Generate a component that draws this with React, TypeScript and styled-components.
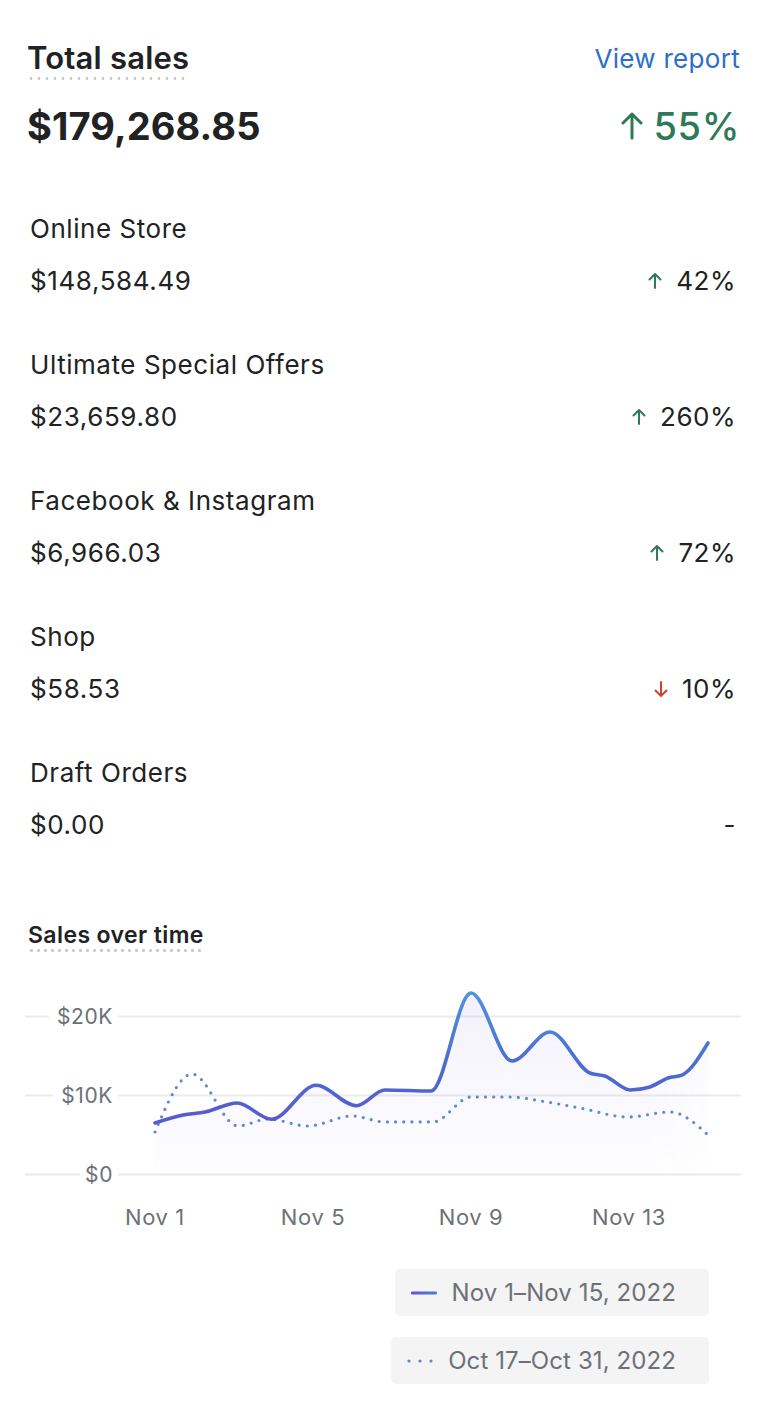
import React from "react";
import styled, { createGlobalStyle } from "styled-components";

const GlobalStyle = createGlobalStyle`
  html, body { margin: 0; padding: 0; background: #ffffff; }
  body { font-family: Inter, "Noto Sans", sans-serif; color: #202223; -webkit-font-smoothing: antialiased; }
  * { box-sizing: border-box; }
`;

const GREEN = "#2e7a58";
const RED = "#d0432b";
const MUTED = "#6d7175";

const Page = styled.main`
  width: 769px;
  padding: 39px 29px 40px 25px;
  display: flex;
  flex-direction: column;
`;

const Header = styled.section`
  display: flex;
  flex-direction: column;
  gap: 24px;
  padding-left: 2px;
`;

const HeaderLine = styled.div`
  display: flex;
  justify-content: space-between;
  align-items: center;
`;

const DottedTitle = styled.h2<{ $size: number; $line: number; $gap: number; $track: number }>`
  margin: 0;
  display: inline-block;
  font-size: ${(p) => p.$size}px;
  line-height: ${(p) => p.$line}px;
  font-weight: 600;
  letter-spacing: ${(p) => p.$track}px;
  padding-bottom: 3px;
  background-image: radial-gradient(circle, #c6cacf 1.3px, transparent 1.6px);
  background-size: ${(p) => p.$gap}px 3px;
  background-repeat: repeat-x;
  background-position: 0 100%;
`;

const ReportLink = styled.a`
  font-size: 26px;
  line-height: 40px;
  letter-spacing: 0.3px;
  color: #2c6ecb;
  text-decoration: none;
  align-self: flex-start;
`;

const TotalAmount = styled.div`
  font-size: 38px;
  line-height: 44px;
  font-weight: 700;
  letter-spacing: 0.1px;
`;

const Change = styled.div<{ $big?: boolean; $tone: "up" | "down" | "none" }>`
  display: flex;
  align-items: center;
  gap: ${(p) => (p.$big ? 10 : 14)}px;
  font-size: ${(p) => (p.$big ? 38 : 26)}px;
  line-height: ${(p) => (p.$big ? 44 : 32)}px;
  letter-spacing: ${(p) => (p.$big ? 0.6 : 0.5)}px;
  font-weight: ${(p) => (p.$big ? 500 : 400)};
  color: ${(p) => (p.$big ? GREEN : "#202223")};
  svg {
    color: ${(p) => (p.$tone === "down" ? RED : GREEN)};
  }
`;

const Rows = styled.div`
  margin-top: 65px;
  display: flex;
  flex-direction: column;
  gap: 52px;
`;

const Row = styled.div`
  display: flex;
  flex-direction: column;
  gap: 20px;
  padding: 0 4px 0 5px;
`;

const RowLabel = styled.div`
  font-size: 26px;
  line-height: 32px;
  letter-spacing: 0.55px;
`;

const RowValueLine = styled.div`
  display: flex;
  justify-content: space-between;
  align-items: center;
  font-size: 26px;
  line-height: 32px;
  letter-spacing: 0.6px;
`;

const ChartSection = styled.section`
  margin-top: 80px;
  display: flex;
  flex-direction: column;
`;

const ChartTitleWrap = styled.div`
  padding-left: 3px;
`;

const ChartSvg = styled.svg`
  display: block;
  margin-top: 27px;
  overflow: visible;
`;

const Legend = styled.div`
  margin-top: 30px;
  margin-right: 31px;
  display: flex;
  flex-direction: column;
  align-items: flex-end;
  gap: 21px;
`;

const LegendPill = styled.div`
  height: 47px;
  display: flex;
  align-items: center;
  gap: 15px;
  padding: 0 33px 0 16px;
  background: #f4f4f5;
  border-radius: 5px;
  font-size: 24px;
  letter-spacing: 0.1px;
  color: ${MUTED};
`;

type Tone = "up" | "down" | "none";

function Arrow({ dir, big }: { dir: "up" | "down"; big?: boolean }) {
  const w = big ? 22 : 14;
  const h = big ? 30 : 18;
  const sw = big ? 3 : 2;
  const cx = w / 2;
  const top = sw;
  const bot = h - sw;
  const wing = big ? 9 : 5.5;
  const d =
    dir === "up"
      ? `M${cx} ${bot} V${top} M${cx - wing} ${top + wing} L${cx} ${top} L${cx + wing} ${top + wing}`
      : `M${cx} ${top} V${bot} M${cx - wing} ${bot - wing} L${cx} ${bot} L${cx + wing} ${bot - wing}`;
  return (
    <svg width={w} height={h} viewBox={`0 0 ${w} ${h}`} fill="none">
      <path d={d} stroke="currentColor" strokeWidth={sw} strokeLinecap="round" strokeLinejoin="round" />
    </svg>
  );
}

const channels: { name: string; value: string; change: string; tone: Tone }[] = [
  { name: "Online Store", value: "$148,584.49", change: "42%", tone: "up" },
  { name: "Ultimate Special Offers", value: "$23,659.80", change: "260%", tone: "up" },
  { name: "Facebook & Instagram", value: "$6,966.03", change: "72%", tone: "up" },
  { name: "Shop", value: "$58.53", change: "10%", tone: "down" },
  { name: "Draft Orders", value: "$0.00", change: "-", tone: "none" },
];

const current: [number, number][] = [
  [0, 6.52], [0.71, 7.53], [1.27, 7.91], [2.08, 9.05], [2.95, 7.0],
  [4.08, 11.3], [5.1, 8.7], [5.82, 10.7], [6.99, 10.57], [8.0, 22.97],
  [9.04, 14.37], [10.0, 18.04], [11.01, 12.85], [11.39, 12.47], [12.03, 10.7], [12.53, 11.08],
  [12.99, 12.22], [13.34, 12.59], [14.0, 16.65],
];
const previous: [number, number][] = [
  [0, 5.38], [0.94, 12.72], [2.1, 6.14], [2.86, 7.03], [3.87, 6.14], [4.99, 7.41], [5.82, 6.65],
  [7.04, 6.65], [8.0, 9.81], [8.99, 9.81], [9.92, 9.18], [10.76, 8.42], [11.97, 7.28], [13.04, 7.91],
  [14.0, 5.0],
];

const X0 = 130;
const DX = 39.5;
const Y_ZERO = 195.5;
const PER_K = 7.9;

type Pt = [number, number];

function toPoints(vals: [number, number][]): Pt[] {
  return vals.map(([d, v]) => [X0 + d * DX, Y_ZERO - v * PER_K]);
}

function monotonePath(pts: Pt[]): string {
  const n = pts.length;
  const sign = (v: number) => (v < 0 ? -1 : 1);
  const t: number[] = new Array(n).fill(0);
  for (let i = 1; i < n - 1; i++) {
    const [x0, y0] = pts[i - 1];
    const [x1, y1] = pts[i];
    const [x2, y2] = pts[i + 1];
    const h0 = x1 - x0;
    const h1 = x2 - x1;
    const s0 = (y1 - y0) / h0;
    const s1 = (y2 - y1) / h1;
    const p = (s0 * h1 + s1 * h0) / (h0 + h1);
    t[i] = (sign(s0) + sign(s1)) * Math.min(Math.abs(s0), Math.abs(s1), 0.5 * Math.abs(p)) || 0;
  }
  {
    const h = pts[1][0] - pts[0][0];
    t[0] = (3 * (pts[1][1] - pts[0][1]) / h - t[1]) / 2;
    const hl = pts[n - 1][0] - pts[n - 2][0];
    t[n - 1] = (3 * (pts[n - 1][1] - pts[n - 2][1]) / hl - t[n - 2]) / 2;
  }
  let d = `M${pts[0][0]} ${pts[0][1]}`;
  for (let i = 0; i < n - 1; i++) {
    const [x0, y0] = pts[i];
    const [x1, y1] = pts[i + 1];
    const dx = (x1 - x0) / 3;
    d += ` C${(x0 + dx).toFixed(2)} ${(y0 + dx * t[i]).toFixed(2)} ${(x1 - dx).toFixed(2)} ${(y1 - dx * t[i + 1]).toFixed(2)} ${x1.toFixed(2)} ${y1.toFixed(2)}`;
  }
  return d;
}

const gridLines = [
  { y: 37.5, label: "$20K", bgFrom: 24 },
  { y: 116.5, label: "$10K", bgFrom: 28 },
  { y: 195.5, label: "$0", bgFrom: 55 },
];

const xTicks = [
  { i: 0, label: "Nov 1" },
  { i: 4, label: "Nov 5" },
  { i: 8, label: "Nov 9" },
  { i: 12, label: "Nov 13" },
];

function SalesChart() {
  const cur = toPoints(current);
  const prev = toPoints(previous);
  const curPath = monotonePath(cur);
  const prevPath = monotonePath(prev);
  const last = cur[cur.length - 1];
  const areaPath = `${curPath} L${last[0]} ${Y_ZERO} L${cur[0][0]} ${Y_ZERO} Z`;
  return (
    <ChartSvg width={716} height={260} viewBox="0 0 716 260">
      <defs>
        <linearGradient id="areaFill" x1="0" y1="0" x2="0" y2="1">
          <stop offset="0" stopColor="#7b6fe6" stopOpacity="0.09" />
          <stop offset="1" stopColor="#7b6fe6" stopOpacity="0.01" />
        </linearGradient>
        <linearGradient id="areaFade" gradientUnits="userSpaceOnUse" x1="620" y1="0" x2="690" y2="0">
          <stop offset="0" stopColor="#ffffff" />
          <stop offset="1" stopColor="#ffffff" stopOpacity="0.35" />
        </linearGradient>
        <mask id="areaMask">
          <rect x="0" y="0" width="716" height="260" fill="url(#areaFade)" />
        </mask>
        <linearGradient id="lineStroke" gradientUnits="userSpaceOnUse" x1="0" y1="10" x2="0" y2="150">
          <stop offset="0" stopColor="#4f93e2" />
          <stop offset="0.55" stopColor="#4c6ccd" />
          <stop offset="1" stopColor="#5a57d2" />
        </linearGradient>
      </defs>
      {gridLines.map((g) => (
        <g key={g.label}>
          <line x1={0} x2={716} y1={g.y} y2={g.y} stroke="#ebebec" strokeWidth={2} />
          <rect x={g.bgFrom} y={g.y - 12} width={93 - g.bgFrom} height={24} fill="#ffffff" />
          <text
            x={88}
            y={g.y + 7.5}
            textAnchor="end"
            fontFamily="Inter, sans-serif"
            fontSize={21}
            letterSpacing={0.6}
            fill={MUTED}
          >
            {g.label}
          </text>
        </g>
      ))}
      <path d={areaPath} fill="url(#areaFill)" mask="url(#areaMask)" />
      <path
        d={prevPath}
        fill="none"
        stroke="#5f88d0"
        strokeWidth={3.2}
        strokeLinecap="round"
        strokeDasharray="0 8.2"
      />
      <path d={curPath} fill="none" stroke="url(#lineStroke)" strokeWidth={3.6} strokeLinecap="round" />
      {xTicks.map((t) => (
        <text
          key={t.label}
          x={X0 + t.i * DX}
          y={246}
          textAnchor="middle"
          fontFamily="Inter, sans-serif"
          fontSize={22}
          letterSpacing={0.6}
          fill={MUTED}
        >
          {t.label}
        </text>
      ))}
    </ChartSvg>
  );
}

function LegendSolid() {
  return (
    <svg width={26} height={6} viewBox="0 0 26 6">
      <defs>
        <linearGradient id="legendLine" gradientUnits="userSpaceOnUse" x1="0" y1="3" x2="26" y2="3">
          <stop offset="0" stopColor="#6a4fdb" />
          <stop offset="1" stopColor="#4b7fd3" />
        </linearGradient>
      </defs>
      <line x1={1.5} y1={3} x2={24.5} y2={3} stroke="url(#legendLine)" strokeWidth={3.2} strokeLinecap="round" />
    </svg>
  );
}

function LegendDotted() {
  return (
    <svg width={26} height={6} viewBox="0 0 26 6">
      {[2, 13, 24].map((x) => (
        <circle key={x} cx={x} cy={3} r={1.6} fill="#5f88d0" />
      ))}
    </svg>
  );
}

export default function App() {
  return (
    <>
      <GlobalStyle />
      <Page>
        <Header>
          <HeaderLine>
            <DottedTitle $size={31} $line={38} $gap={8} $track={0.2}>
              Total sales
            </DottedTitle>
            <ReportLink href="#">View report</ReportLink>
          </HeaderLine>
          <HeaderLine>
            <TotalAmount>$179,268.85</TotalAmount>
            <Change $big $tone="up">
              <Arrow dir="up" big />
              55%
            </Change>
          </HeaderLine>
        </Header>

        <Rows>
          {channels.map((c) => (
            <Row key={c.name}>
              <RowLabel>{c.name}</RowLabel>
              <RowValueLine>
                <span>{c.value}</span>
                <Change $tone={c.tone}>
                  {c.tone !== "none" && <Arrow dir={c.tone === "down" ? "down" : "up"} />}
                  {c.change}
                </Change>
              </RowValueLine>
            </Row>
          ))}
        </Rows>

        <ChartSection>
          <ChartTitleWrap>
            <DottedTitle $size={23} $line={28} $gap={7} $track={0.4}>
              Sales over time
            </DottedTitle>
          </ChartTitleWrap>
          <SalesChart />
          <Legend>
            <LegendPill>
              <LegendSolid />
              Nov 1–Nov 15, 2022
            </LegendPill>
            <LegendPill>
              <LegendDotted />
              Oct 17–Oct 31, 2022
            </LegendPill>
          </Legend>
        </ChartSection>
      </Page>
    </>
  );
}
